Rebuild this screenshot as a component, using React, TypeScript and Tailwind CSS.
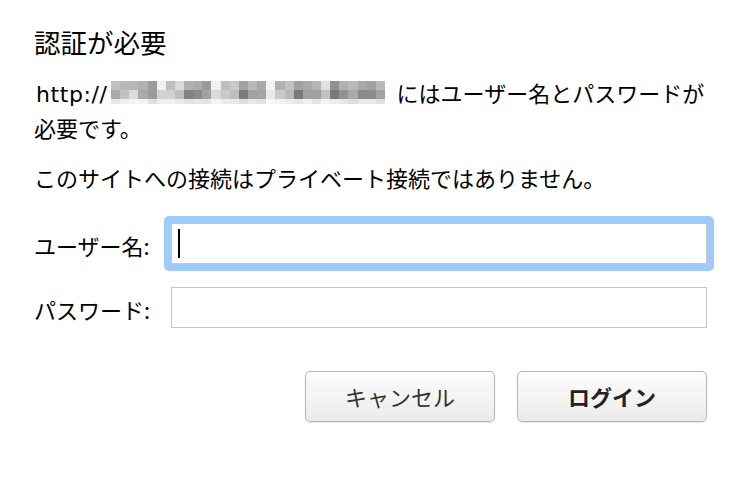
import React from 'react';

// pixelated (blurred) host name in the URL
const mosaicRows: { h: number; colors: string[] }[] = [
  {
    h: 9,
    colors: [
      '#c2c2c2', '#b9b9bc', '#b6b6b6', '#b2b2b2', '#9b9b9b', '#eff1f4', '#bdbdbd', '#d9d9d9', '#b1b1b1', '#ababab',
      '#9a9a9a', '#f1f1f1', '#bebebe', '#c9c9c9', '#a2a2a2', '#b9b9b9', '#a9a9a9', '#f4f4f6', '#b1b1b1', '#c1c1c1',
      '#a1a1a1', '#a9a9a9', '#b1b5b9', '#e1e1e1', '#919191', '#b1b1b1', '#b9b9b9', '#a9a9a9', '#a1a1a1', '#b9b9b9',
    ],
  },
  {
    h: 9,
    colors: [
      '#a9a9a9', '#c1c1c5', '#d9dbd9', '#a9a9a9', '#9b9b9b', '#d1d1d9', '#d0d0d0', '#bebebe', '#868181', '#8b8d8d',
      '#a1a1a1', '#d9d9dd', '#c9c9c9', '#bebebe', '#7a7a7a', '#a1a1a5', '#a1a5a5', '#e9e9ed', '#c9c9c9', '#b9b9b9',
      '#7b7b7b', '#a1a1a1', '#9da1a5', '#c1c1c1', '#797979', '#919191', '#a9a9a9', '#898989', '#8b8b8b', '#a1a1a1',
    ],
  },
  {
    h: 5,
    colors: [
      '#e9e9e9', '#eeeeee', '#f4f4f4', '#f2f2f2', '#e0e0e0', '#eeeef2', '#f0f0f0', '#eaeaea', '#e2e2e2', '#e6e6e6',
      '#e4e4e4', '#f4f4f6', '#ececec', '#e8e8e8', '#dedede', '#e8e8e8', '#e0e0e0', '#f8f8f8', '#f4f4f4', '#eeeeee',
      '#e8e8e8', '#f0f0f0', '#e4e4e4', '#f4f4f4', '#eeeeee', '#e8e8e8', '#dddddd', '#e8e8e8', '#eaeaea', '#e0e0e0',
    ],
  },
];

const Mosaic: React.FC = () => {
  const cw = 274 / 30;
  let y = 0;
  return (
    <svg width="274" height="23" viewBox="0 0 274 23" shapeRendering="crispEdges" className="inline-block align-[-2px] ml-[3px] mr-[12px]">
      {mosaicRows.map((row, r) => {
        const top = y;
        y += row.h;
        return row.colors.map((c, i) => (
          <rect key={`${r}-${i}`} x={i * cw} y={top} width={cw + 0.5} height={row.h} fill={c} />
        ));
      })}
    </svg>
  );
};

const App: React.FC = () => {
  return (
    <div className="w-[746px] h-[486px] bg-white pl-[34px] pr-[39px] pt-[26px] text-black font-['Noto_Sans_CJK_JP','Liberation_Sans',sans-serif]">
      <h1 className="text-[26.5px] leading-[32px] font-normal">認証が必要</h1>

      <p className="mt-[17px] text-[22px] leading-[35px]">
        <span className="font-['DejaVu_Sans',sans-serif] leading-[20px] tracking-[0.6px] ml-[2px]">http://</span>
        <Mosaic />
        にはユーザー名とパスワードが必要です。
      </p>

      <p className="mt-[15px] text-[22px] leading-[35px]">このサイトへの接続はプライベート接続ではありません。</p>

      {/* Form */}
      <div className="mt-[28px] grid grid-cols-[137px_1fr] gap-y-[23px] items-center text-[22px]">
        <label className="leading-[35px] pt-[4px]">ユーザー名:</label>
        <div className="h-[41px] border border-[#c6c6c6] bg-white rounded-[1.5px] shadow-[0_0_0_7px_#9fcbf9] flex items-center pl-[6px]">
          <div className="w-[2px] h-[29px] bg-black"></div>
        </div>

        <label className="leading-[35px] pt-[4px]">パスワード:</label>
        <div className="h-[41px] border border-[#c6c6c6] bg-white"></div>
      </div>

      {/* Buttons */}
      <div className="mt-[43px] flex justify-end gap-[22px]">
        <button className="w-[190px] h-[51px] rounded-[5px] border border-[#b3b3b3] bg-gradient-to-b from-[#fdfdfd] to-[#ebebeb] shadow-[0_1px_1px_rgba(0,0,0,0.08)] text-[22px] text-[#333]">
          キャンセル
        </button>
        <button className="w-[190px] h-[51px] rounded-[5px] border border-[#b3b3b3] bg-gradient-to-b from-[#fdfdfd] to-[#ebebeb] shadow-[0_1px_1px_rgba(0,0,0,0.08)] text-[22px] font-bold text-[#222]">
          ログイン
        </button>
      </div>
    </div>
  );
};

export default App;
